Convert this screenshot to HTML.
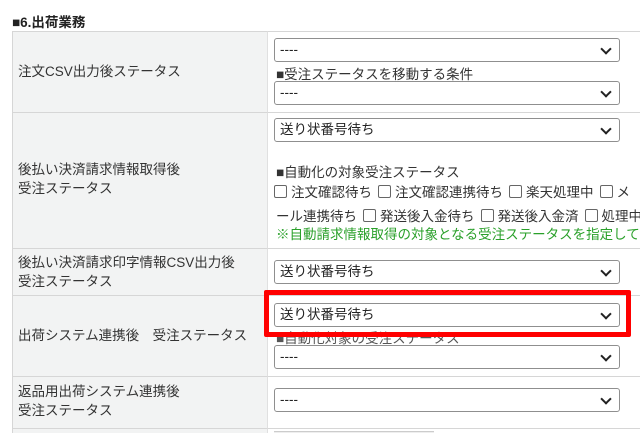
<!DOCTYPE html><html><head><meta charset="utf-8"><style>
*{box-sizing:border-box;margin:0;padding:0}
html,body{width:640px;height:433px;overflow:hidden}
body{background:#fff;font-family:"Liberation Sans","Noto Sans CJK JP",sans-serif;font-size:13.5px;color:#333}
#w{position:relative;width:640px;height:433px;overflow:hidden}
.a{position:absolute;white-space:nowrap}
.lab{position:absolute;left:12px;width:256px;background:#f2f3f3;border:1px solid #d6d6d6;border-right:1px solid #e0e0e0}
.val{position:absolute;left:268px;width:372px;background:#fff;border-top:1px solid #d6d6d6;border-bottom:1px solid #d6d6d6}
.t{position:absolute;left:5px;line-height:19px;font-size:13.5px;color:#333}
.sel{position:absolute;left:274px;width:346px;height:24px;border:1px solid #8f8f8f;border-radius:3px;background:#fff;font-size:13.5px;line-height:22px;padding-left:5px;color:#222}
.sel:after{content:"";position:absolute;right:9px;top:6px;width:6px;height:6px;border-right:2px solid #222;border-bottom:2px solid #222;transform:rotate(45deg)}
.cb{display:inline-block;width:13px;height:13px;border:1px solid #666;border-radius:2px;vertical-align:-1px;margin:0 4px 0 6px}
.clip{position:absolute;left:272px;width:368px;overflow:hidden;white-space:nowrap}
</style></head><body><div id="w">
<div class="a" style="left:12px;top:11px;font-weight:bold;color:#222">■6.出荷業務</div>
<div class="lab" style="top:31px;height:82px"><div class="t" style="top:30px">注文CSV出力後ステータス</div></div>
<div class="val" style="top:31px;height:82px"></div>
<div class="lab" style="top:112px;height:137px"><div class="t" style="top:47px">後払い決済請求情報取得後<br>受注ステータス</div></div>
<div class="val" style="top:112px;height:137px"></div>
<div class="lab" style="top:248px;height:48px"><div class="t" style="top:4px">後払い決済請求印字情報CSV出力後<br>受注ステータス</div></div>
<div class="val" style="top:248px;height:48px"></div>
<div class="lab" style="top:295px;height:82px"><div class="t" style="top:30px">出荷システム連携後　受注ステータス</div></div>
<div class="val" style="top:295px;height:82px"></div>
<div class="lab" style="top:376px;height:53px"><div class="t" style="top:5px">返品用出荷システム連携後<br>受注ステータス</div></div>
<div class="val" style="top:376px;height:53px"></div>
<div class="lab" style="top:428px;height:5px;border-bottom:none"></div><div class="val" style="top:428px;height:5px;border-bottom:none"></div>
<div class="a" style="left:274px;top:431px;width:160px;height:2px;background:#eee;border-top:1px solid #ccc"></div>

<div class="sel" style="top:38px">----</div>
<div class="a" style="left:276px;top:63px">■受注ステータスを移動する条件</div>
<div class="sel" style="top:81px">----</div>

<div class="sel" style="top:118px">送り状番号待ち</div>
<div class="a" style="left:276px;top:161px">■自動化の対象受注ステータス</div>
<div class="clip" style="top:181px"><span class="cb" style="margin-left:2px"></span>注文確認待ち<span class="cb"></span>注文確認連携待ち<span class="cb"></span>楽天処理中<span class="cb"></span>メ</div>
<div class="clip" style="top:205px;padding-left:4px">ール連携待ち<span class="cb"></span>発送後入金待ち<span class="cb"></span>発送後入金済<span class="cb"></span>処理中</div>
<div class="clip" style="top:223px;padding-left:4px;color:#2aa02a">※自動請求情報取得の対象となる受注ステータスを指定して下さい</div>

<div class="sel" style="top:260px">送り状番号待ち</div>

<div class="a" style="left:276px;top:327px;color:#555">■自動化対象の受注ステータス</div>
<div class="sel" style="top:345px">----</div>
<div class="sel" style="top:303px">送り状番号待ち</div>
<div class="a" style="left:264px;top:290px;width:367px;height:47px;border:5px solid #f00;border-radius:2px"></div>

<div class="sel" style="top:388px">----</div>
</div></body></html>
